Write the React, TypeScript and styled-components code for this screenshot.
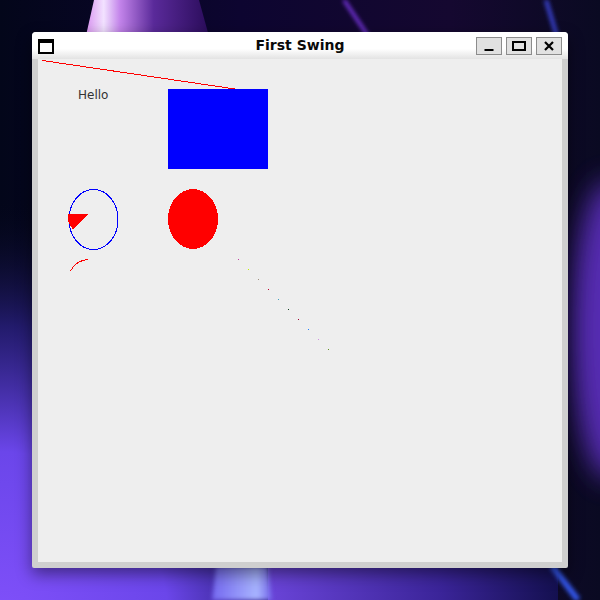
import React from 'react';
import styled, { createGlobalStyle } from 'styled-components';

const GlobalStyle = createGlobalStyle`
  html, body {
    margin: 0;
    padding: 0;
    overflow: hidden;
  }
`;

const Desktop = styled.div`
  position: relative;
  width: 600px;
  height: 600px;
  padding: 32px;
  box-sizing: border-box;
  overflow: hidden;
  background: #070717;
`;

const Wallpaper = styled.svg`
  position: absolute;
  inset: 0;
  z-index: 0;
`;

const Window = styled.div`
  position: relative;
  z-index: 1;
  width: 536px;
  height: 536px;
  display: flex;
  flex-direction: column;
  border-radius: 4px 4px 2px 2px;
  background: #cfcfcf;
  box-shadow: 0 6px 16px rgba(0, 0, 0, 0.45);
  overflow: hidden;
`;

const TitleBar = styled.div`
  height: 27px;
  flex: none;
  display: grid;
  grid-template-columns: 1fr auto 1fr;
  align-items: center;
  padding: 0 6px;
  box-sizing: border-box;
  background: linear-gradient(#ffffff 0%, #ffffff 62%, #e3e3e3 100%);
`;

const WindowIcon = styled.div`
  width: 16px;
  height: 15px;
  box-sizing: border-box;
  border: 2px solid #000;
  border-top-width: 4px;
  background: #fff;
  margin-top: 1px;
`;

const Title = styled.div`
  font-family: 'DejaVu Sans', 'Liberation Sans', sans-serif;
  font-weight: bold;
  font-size: 14px;
  color: #0a0a0a;
  margin-top: -1px;
`;

const Controls = styled.div`
  justify-self: end;
  display: flex;
  gap: 4px;
  margin-top: 1px;
`;

const ControlButton = styled.div`
  width: 26px;
  height: 18px;
  box-sizing: border-box;
  border: 1px solid #8c8c8c;
  background: #e1e1e1;
  display: flex;
  align-items: center;
  justify-content: center;
`;

const Frame = styled.div`
  flex: 1;
  display: flex;
  padding: 0 6px 6px 6px;
`;

const Canvas = styled.div`
  flex: 1;
  background: #eeeeee;
  position: relative;
`;

const Drawing = styled.svg`
  display: block;
`;

const HelloText = styled.text`
  font-family: 'DejaVu Sans', 'Liberation Sans', sans-serif;
  font-size: 12px;
  fill: #333333;
`;

const dotColors = [
  '#c040a0',
  '#c0f000',
  '#a09080',
  '#c00030',
  '#40a0c0',
  '#104020',
  '#a00030',
  '#2080ff',
  '#d090e0',
  '#609020',
];

function WallpaperArt() {
  return (
    <Wallpaper width={600} height={600} viewBox="0 0 600 600">
      <defs>
        <linearGradient id="topTint" x1="0" y1="0" x2="1" y2="0">
          <stop offset="0" stopColor="#03061a" />
          <stop offset="0.4" stopColor="#0d0530" />
          <stop offset="0.75" stopColor="#150830" />
          <stop offset="1" stopColor="#0a0a22" />
        </linearGradient>
        <radialGradient id="bottomLeft" cx="0" cy="620" r="420" gradientUnits="userSpaceOnUse">
          <stop offset="0" stopColor="#8050fa" />
          <stop offset="0.4" stopColor="#6b46ea" />
          <stop offset="0.7" stopColor="#2a2080" stopOpacity="0.8" />
          <stop offset="1" stopColor="#050818" stopOpacity="0" />
        </radialGradient>
        <linearGradient id="pink" x1="0" y1="0" x2="1" y2="0">
          <stop offset="0" stopColor="#d890f0" />
          <stop offset="0.15" stopColor="#f2e2ff" />
          <stop offset="0.28" stopColor="#c384ea" />
          <stop offset="0.55" stopColor="#5a2a9a" />
          <stop offset="1" stopColor="#2a0c5a" />
        </linearGradient>
        <linearGradient id="bottomStreak" x1="0" y1="0" x2="1" y2="0">
          <stop offset="0" stopColor="#7468f0" />
          <stop offset="0.75" stopColor="#a8b4ff" />
          <stop offset="1" stopColor="#7060e8" />
        </linearGradient>
        <linearGradient id="bottomMid" x1="0" y1="0" x2="1" y2="0">
          <stop offset="0" stopColor="#6a44d8" />
          <stop offset="0.6" stopColor="#3a2498" />
          <stop offset="1" stopColor="#141050" />
        </linearGradient>
        <filter id="soft" x="-50%" y="-50%" width="200%" height="200%">
          <feGaussianBlur stdDeviation="2" />
        </filter>
        <filter id="glow" x="-100%" y="-100%" width="300%" height="300%">
          <feGaussianBlur stdDeviation="14" />
        </filter>
      </defs>
      <rect width="600" height="600" fill="url(#topTint)" />
      <rect width="600" height="600" fill="url(#bottomLeft)" />
      <polygon points="94,0 199,0 210,40 85,40" fill="url(#pink)" />
      <line x1="344" y1="0" x2="368" y2="36" stroke="#8a3cff" strokeWidth="3" filter="url(#soft)" />
      <line x1="546" y1="0" x2="558" y2="40" stroke="#3a44d8" strokeWidth="4" filter="url(#soft)" />
      <ellipse cx="612" cy="330" rx="40" ry="150" fill="#6a36d8" opacity="0.8" filter="url(#glow)" />
      <rect x="268" y="566" width="290" height="34" fill="url(#bottomMid)" />
      <polygon points="216,566 268,566 272,600 212,600" fill="url(#bottomStreak)" filter="url(#soft)" />
      <line x1="552" y1="566" x2="578" y2="600" stroke="#3558f0" strokeWidth="6" filter="url(#soft)" />
    </Wallpaper>
  );
}

function CanvasArt() {
  return (
    <Drawing width={524} height={503} shapeRendering="crispEdges">
      <line x1="4.5" y1="1.5" x2="200.5" y2="30.5" stroke="#ff0000" strokeWidth="1" />
      <HelloText x="40" y="40">Hello</HelloText>
      <rect x="130" y="30" width="100" height="80" fill="#0000ff" />
      <ellipse cx="55.5" cy="160.5" rx="24.5" ry="30" fill="none" stroke="#0000ff" strokeWidth="1" />
      <polygon points="30,155 50,155 35,171 30.5,163" fill="#ff0000" />
      <ellipse cx="155" cy="160" rx="25" ry="30" fill="#ff0000" />
      <path d="M 32.6 212 A 20 20 0 0 1 50.5 200.5" fill="none" stroke="#ff0000" strokeWidth="1" />
      {dotColors.map((c, i) => (
        <rect key={i} x={200 + i * 10} y={200 + i * 10} width="1" height="1" fill={c} />
      ))}
    </Drawing>
  );
}

export default function App() {
  return (
    <>
      <GlobalStyle />
      <Desktop>
        <WallpaperArt />
        <Window>
          <TitleBar>
            <WindowIcon />
            <Title>First Swing</Title>
            <Controls>
              <ControlButton>
                <svg width="10" height="12" viewBox="0 0 10 12">
                  <rect x="0.5" y="9" width="9" height="2" fill="#000" />
                </svg>
              </ControlButton>
              <ControlButton>
                <svg width="14" height="10" viewBox="0 0 14 10">
                  <rect x="1" y="1" width="12" height="8" fill="none" stroke="#000" strokeWidth="2" />
                </svg>
              </ControlButton>
              <ControlButton>
                <svg width="10" height="10" viewBox="0 0 10 10">
                  <path d="M1 1 L9 9 M9 1 L1 9" stroke="#000" strokeWidth="2.2" />
                </svg>
              </ControlButton>
            </Controls>
          </TitleBar>
          <Frame>
            <Canvas>
              <CanvasArt />
            </Canvas>
          </Frame>
        </Window>
      </Desktop>
    </>
  );
}
